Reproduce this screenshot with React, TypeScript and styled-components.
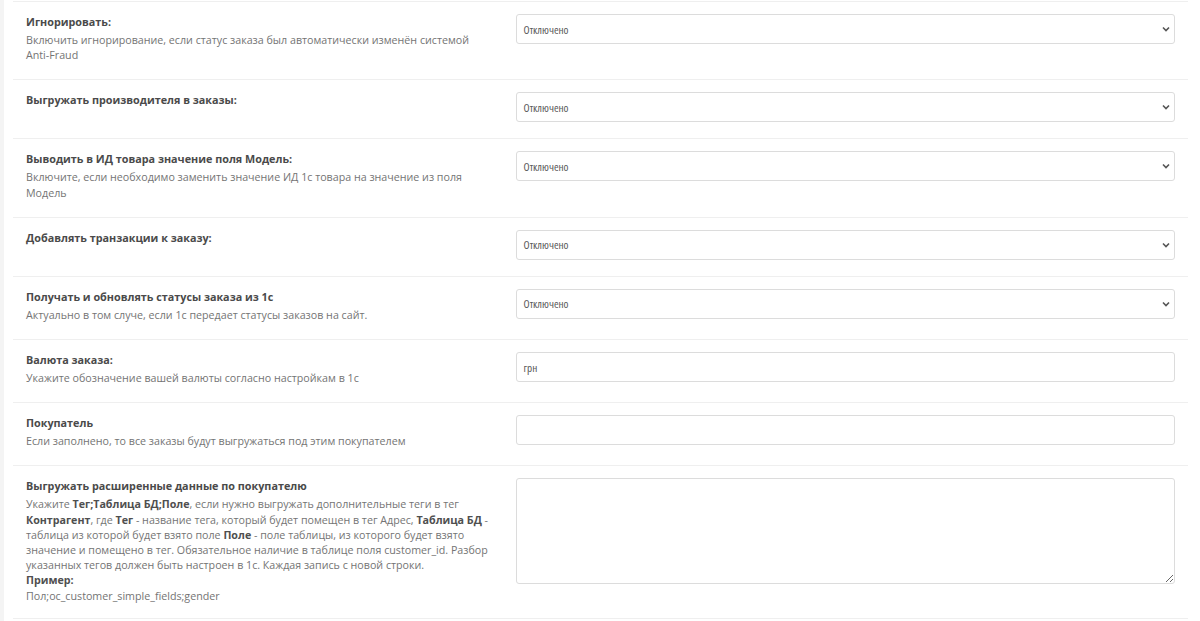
import React from 'react';
import styled, { createGlobalStyle } from 'styled-components';

const GlobalStyle = createGlobalStyle`
  html, body {
    margin: 0;
    padding: 0;
    background: #f4f4f4;
    font-family: "Open Sans", "Liberation Sans", Arial, sans-serif;
  }
`;

const Panel = styled.div`
  margin-left: 4px;
  padding: 1px 12px 0 9px;
  background: #fff;
  min-height: 620px;
`;

const LabelCol = styled.div`
  padding: 12px 13px 16px;
`;

const FieldCol = styled.div`
  padding: 12px 13px 16px;
`;

const Row = styled.div`
  display: grid;
  grid-template-columns: 5fr 7fr;
  border-top: 1px solid #efefef;
  &:last-child {
    border-bottom: 1px solid #efefef;
  }
  &:last-child ${LabelCol} {
    padding-bottom: 14px;
  }
`;

const Title = styled.div`
  font-size: 10.8px;
  line-height: 15px;
  font-weight: 700;
  color: #4a4a4a;
  margin-bottom: 4px;
`;

const Help = styled.div`
  font-size: 10.7px;
  line-height: 15.2px;
  color: #747474;
  b {
    color: #4f4f4f;
    font-weight: 700;
  }
`;

const fieldText = `
  font-family: "Open Sans", "DejaVu Sans Condensed", sans-serif;
  font-stretch: 75%;
  font-size: 11.2px;
  color: #5a5a5a;
`;

const SelectBox = styled.div`
  position: relative;
  height: 30px;
  box-sizing: border-box;
  border: 1px solid #dcdcdc;
  border-radius: 3px;
  background: #fff;
  display: flex;
  align-items: center;
  padding: 0 7px;
  ${fieldText}
`;

const Chevron = styled.svg`
  position: absolute;
  right: 4px;
  top: 11px;
`;

const TextInput = styled.div`
  height: 30px;
  box-sizing: border-box;
  border: 1px solid #dcdcdc;
  border-radius: 3px;
  background: #fff;
  display: flex;
  align-items: center;
  padding: 0 7px;
  ${fieldText}
`;

const TextArea = styled.textarea`
  display: block;
  width: 100%;
  height: 106px;
  box-sizing: border-box;
  border: 1px solid #dcdcdc;
  border-radius: 3px;
  background: #fff;
  margin: 0;
  resize: vertical;
  font-family: inherit;
  font-size: 11px;
  outline: none;
`;

function Select({ value }: { value: string }) {
  return (
    <SelectBox>
      {value}
      <Chevron width="8" height="6" viewBox="0 0 8 6">
        <polyline points="1,1.5 4,4.5 7,1.5" fill="none" stroke="#555" strokeWidth="1.6" />
      </Chevron>
    </SelectBox>
  );
}

type Setting = {
  title: string;
  help?: React.ReactNode;
  field: React.ReactNode;
};

const settings: Setting[] = [
  {
    title: 'Игнорировать:',
    help: 'Включить игнорирование, если статус заказа был автоматически изменён системой Anti-Fraud',
    field: <Select value="Отключено" />,
  },
  {
    title: 'Выгружать производителя в заказы:',
    field: <Select value="Отключено" />,
  },
  {
    title: 'Выводить в ИД товара значение поля Модель:',
    help: 'Включите, если необходимо заменить значение ИД 1с товара на значение из поля Модель',
    field: <Select value="Отключено" />,
  },
  {
    title: 'Добавлять транзакции к заказу:',
    field: <Select value="Отключено" />,
  },
  {
    title: 'Получать и обновлять статусы заказа из 1с',
    help: 'Актуально в том случе, если 1с передает статусы заказов на сайт.',
    field: <Select value="Отключено" />,
  },
  {
    title: 'Валюта заказа:',
    help: 'Укажите обозначение вашей валюты согласно настройкам в 1с',
    field: <TextInput>грн</TextInput>,
  },
  {
    title: 'Покупатель',
    help: 'Если заполнено, то все заказы будут выгружаться под этим покупателем',
    field: <TextInput />,
  },
  {
    title: 'Выгружать расширенные данные по покупателю',
    help: (
      <>
        Укажите <b>Тег;Таблица БД;Поле</b>, если нужно выгружать дополнительные теги в тег{' '}
        <b>Контрагент</b>, где <b>Тег</b> - название тега, который будет помещен в тег Адрес,{' '}
        <b>Таблица БД</b> - таблица из которой будет взято поле <b>Поле</b> - поле таблицы, из
        которого будет взято значение и помещено в тег. Обязательное наличие в таблице поля
        customer_id. Разбор указанных тегов должен быть настроен в 1с. Каждая запись с новой
        строки.
        <br />
        <b>Пример:</b>
        <br />
        Пол;oc_customer_simple_fields;gender
      </>
    ),
    field: <TextArea />,
  },
];

export default function App() {
  return (
    <>
      <GlobalStyle />
      <Panel>
        {settings.map((s) => (
          <Row key={s.title}>
            <LabelCol>
              <Title>{s.title}</Title>
              {s.help && <Help>{s.help}</Help>}
            </LabelCol>
            <FieldCol>{s.field}</FieldCol>
          </Row>
        ))}
      </Panel>
    </>
  );
}
